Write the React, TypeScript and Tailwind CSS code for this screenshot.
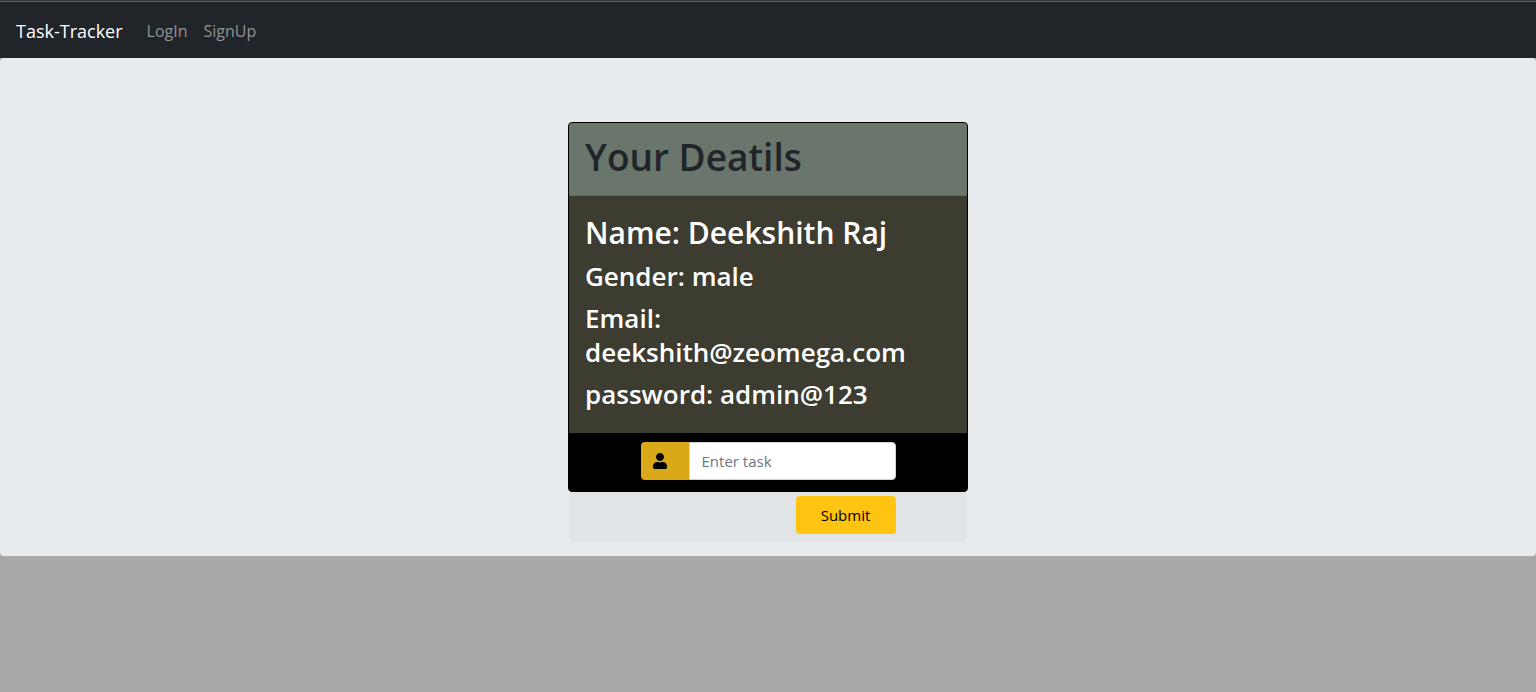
import { FaUser } from "react-icons/fa";

const details = [
  "Gender: male",
  "Email: deekshith@zeomega.com",
  "password: admin@123",
];

function NavBar() {
  return (
    <header className="bg-[#212529]">
      <div className="h-0.5 border-b border-[#5f6368] bg-[#35363a]" />
      <nav className="flex h-14 items-center px-4 pt-0.5">
        <a href="#" className="mr-4 text-[18px] leading-8 text-white">
          Task-Tracker
        </a>
        <ul className="flex text-[16px] leading-6 text-[#909294]">
          <li>
            <a href="#login" className="block px-2">
              LogIn
            </a>
          </li>
          <li>
            <a href="#signup" className="block px-2">
              SignUp
            </a>
          </li>
        </ul>
      </nav>
    </header>
  );
}

function TaskForm() {
  return (
    <form
      className="flex flex-col items-center rounded-b bg-black/3 pt-[9px] pb-2"
      onSubmit={(event) => event.preventDefault()}
    >
      <div className="flex w-[255px] flex-col gap-4">
        <div className="flex h-[38px]">
          <label
            htmlFor="task"
            aria-label="Task"
            className="flex w-12 shrink-0 items-center rounded-l bg-[#d9a91a] pl-3 text-black"
          >
            <FaUser className="h-4 w-3.5" />
          </label>
          <input
            id="task"
            type="text"
            placeholder="Enter task"
            className="w-full min-w-0 rounded-r border border-[#ced4da] bg-white px-3 text-[15px] leading-6 text-[#212529] outline-none placeholder:text-[#6c757d]"
          />
        </div>
        <button
          type="submit"
          className="h-[38px] w-[100px] self-end rounded bg-[#ffc312] text-[15px] leading-6 text-black"
        >
          Submit
        </button>
      </div>
    </form>
  );
}

export default function App() {
  return (
    <div className="min-h-screen bg-[#a9a9a9] font-['Segoe_UI','Open_Sans','Noto_Sans',sans-serif] text-[#212529]">
      <NavBar />
      <main className="rounded bg-[#e8ecef] px-4 py-16">
        <section className="mx-auto h-[370px] max-w-[400px] rounded border border-black bg-black">
          <div className="rounded-t-[3px] border-b border-[#5f695f] bg-[#6a756b] px-4 pt-[10px] pb-[14px]">
            <h1 className="text-[37px] leading-12 font-semibold">Your Deatils</h1>
          </div>
          <div className="flex flex-col gap-2 bg-[#3d3c31] px-4 pt-[18px] pb-[22px] font-semibold text-white">
            <h2 className="text-[30px] leading-[37px]">Name: Deekshith Raj</h2>
            {details.map((detail) => (
              <h3 key={detail} className="text-[26px] leading-[34px]">
                {detail}
              </h3>
            ))}
          </div>
          <TaskForm />
        </section>
      </main>
    </div>
  );
}
